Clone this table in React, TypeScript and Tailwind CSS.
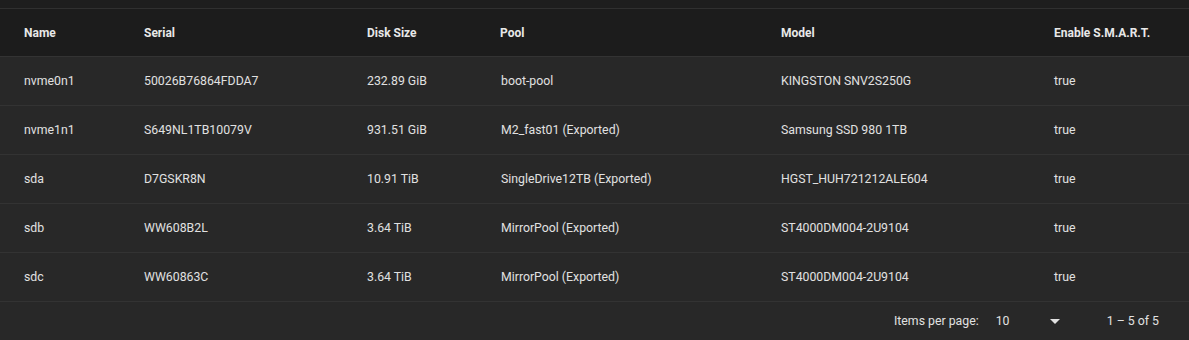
const disks = [
  { name: "nvme0n1", serial: "50026B76864FDDA7", size: "232.89 GiB", pool: "boot-pool", model: "KINGSTON SNV2S250G", smart: "true" },
  { name: "nvme1n1", serial: "S649NL1TB10079V", size: "931.51 GiB", pool: "M2_fast01 (Exported)", model: "Samsung SSD 980 1TB", smart: "true" },
  { name: "sda", serial: "D7GSKR8N", size: "10.91 TiB", pool: "SingleDrive12TB (Exported)", model: "HGST_HUH721212ALE604", smart: "true" },
  { name: "sdb", serial: "WW608B2L", size: "3.64 TiB", pool: "MirrorPool (Exported)", model: "ST4000DM004-2U9104", smart: "true" },
  { name: "sdc", serial: "WW60863C", size: "3.64 TiB", pool: "MirrorPool (Exported)", model: "ST4000DM004-2U9104", smart: "true" },
];

// column widths follow the header positions in the screenshot
const cols = "grid grid-cols-[144px_223px_133px_281px_273px_1fr]";

export default function App() {
  return (
    <div className="w-[1189px] h-[340px] bg-[#1e1e1e] text-[#e1e1e1] font-['Roboto',sans-serif] text-[12px] overflow-hidden">
      <div className="h-[9px] border-b border-[#303030]" />

      <div className={`${cols} h-[48px] items-center bg-[#1c1c1c] border-b border-[#333] font-bold text-[#e8e8e8]`}>
        <div className="pl-6">Name</div>
        <div>Serial</div>
        <div>Disk Size</div>
        <div>Pool</div>
        <div>Model</div>
        <div>Enable S.M.A.R.T.</div>
      </div>

      {disks.map((d) => (
        <div
          key={d.name}
          className={`${cols} h-[49px] items-center bg-[#282828] border-b border-[#333] text-[12.3px]`}
        >
          <div className="pl-6">{d.name}</div>
          <div>{d.serial}</div>
          <div>{d.size}</div>
          <div className="pl-px">{d.pool}</div>
          <div>{d.model}</div>
          <div>{d.smart}</div>
        </div>
      ))}

      <div className="h-[38px] bg-[#282828] flex items-center justify-end pr-[30px] text-[12.3px]">
        <span className="mr-[17px]">Items per page:</span>
        <div className="flex items-center w-[64px] mr-[47px]">
          <span className="flex-1">10</span>
          <span className="w-0 h-0 border-l-[5px] border-r-[5px] border-t-[5px] border-l-transparent border-r-transparent border-t-[#e1e1e1]" />
        </div>
        <span>1 – 5 of 5</span>
      </div>
    </div>
  );
}
